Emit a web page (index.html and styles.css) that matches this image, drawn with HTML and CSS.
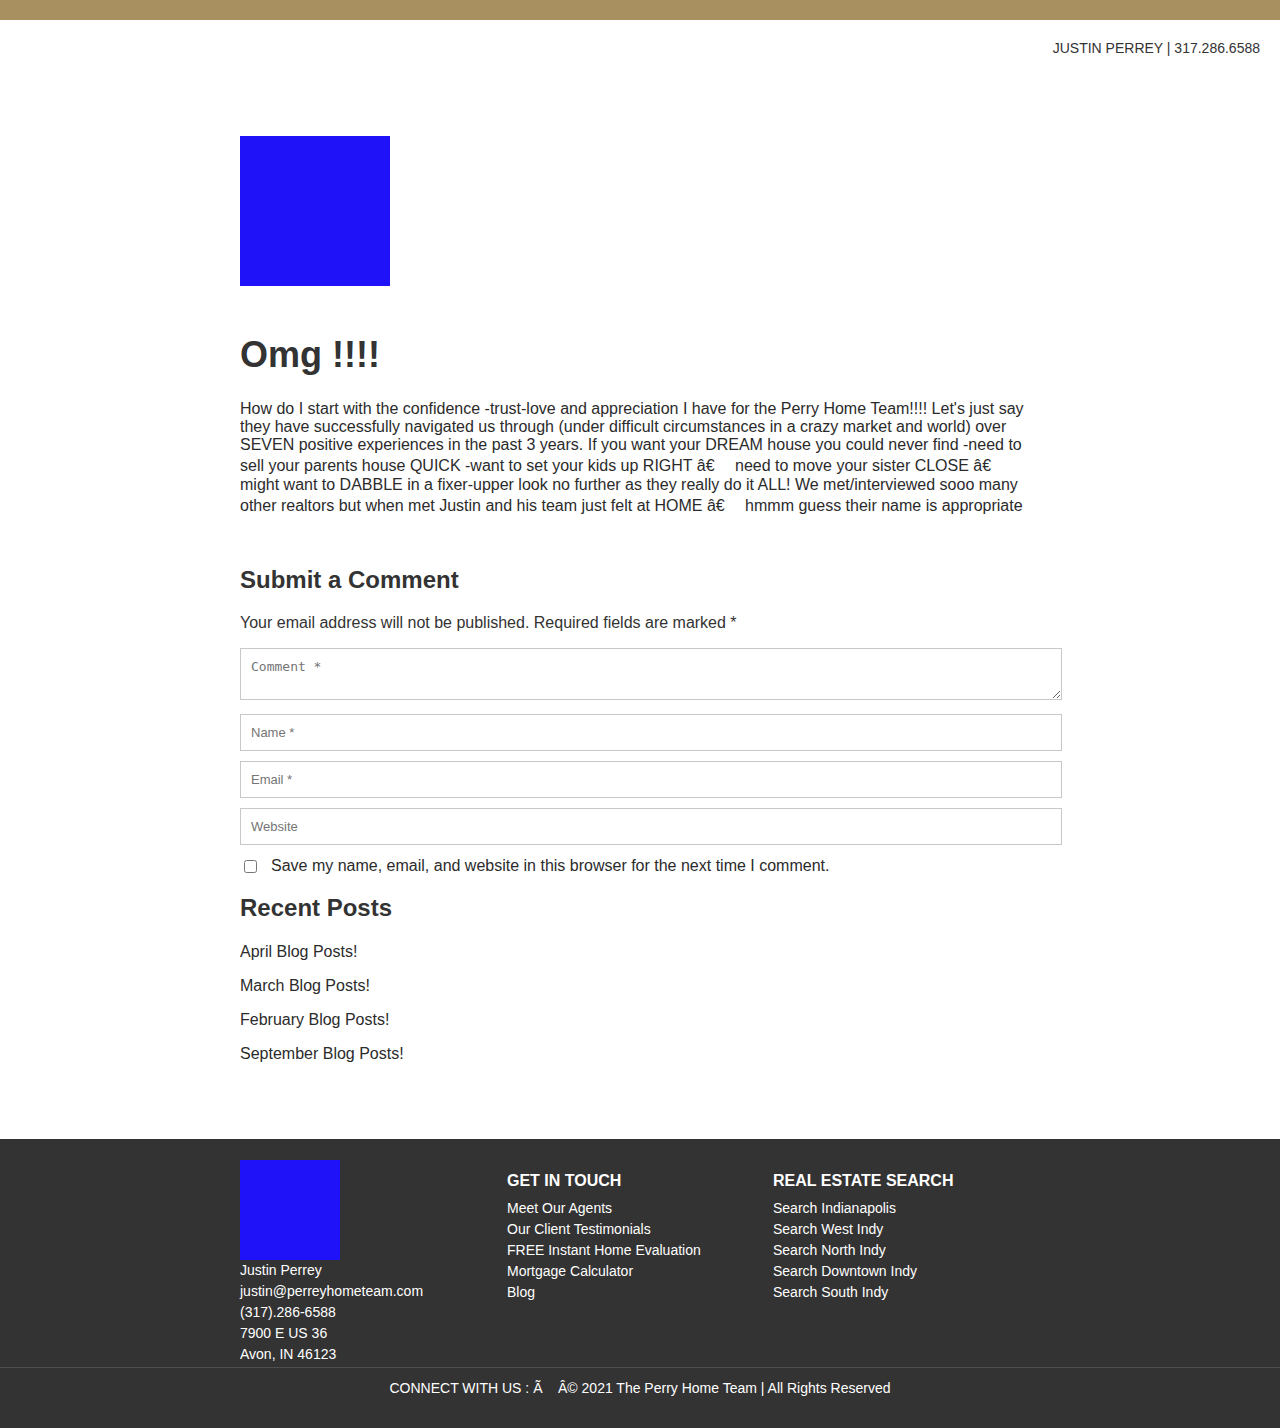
FILE: index.html
```html
<!DOCTYPE html>
<html lang="en">
<head>
<meta charset="utf-8">
<title>Omg !!!! | The Perry Home Team</title>
<link rel="stylesheet" href="styles.css">
</head>
<body>
<div class="topbar"></div>
<header class="site-header">
  <div class="header-contact">JUSTIN PERREY | 317.286.6588</div>
</header>
<main class="container main">
  <div class="logo"></div>
  <h1 class="post-title">Omg !!!!</h1>
  <p class="post-body">How do I start with the confidence -trust-love and appreciation I have for the Perry Home Team!!!! Let's just say they have successfully navigated us through (under difficult circumstances in a crazy market and world) over SEVEN positive experiences in the past 3 years. If you want your DREAM house you could never find -need to sell your parents house QUICK -want to set your kids up RIGHT â€<span class="gap"></span> need to move your sister CLOSE â€<span class="gap"></span> might want to DABBLE in a fixer-upper look no further as they really do it ALL! We met/interviewed sooo many other realtors but when met Justin and his team just felt at HOME â€<span class="gap"></span> hmmm guess their name is appropriate</p>

  <section class="comments">
    <h3 class="section-title">Submit a Comment</h3>
    <p class="notes">Your email address will not be published. Required fields are marked *</p>
    <form class="comment-form">
      <textarea class="field field-comment" placeholder="Comment *"></textarea>
      <input class="field" type="text" placeholder="Name *">
      <input class="field" type="text" placeholder="Email *">
      <input class="field" type="text" placeholder="Website">
      <label class="consent"><input type="checkbox" class="consent-box"><span>Save my name, email, and website in this browser for the next time I comment.</span></label>
    </form>
  </section>

  <section class="recent">
    <h3 class="section-title">Recent Posts</h3>
    <ul class="recent-list">
      <li>April Blog Posts!</li>
      <li>March Blog Posts!</li>
      <li>February Blog Posts!</li>
      <li>September Blog Posts!</li>
    </ul>
  </section>
</main>
<footer class="site-footer">
  <div class="container footer-cols">
    <div class="footer-col">
      <div class="footer-logo"></div>
      <ul class="footer-list">
        <li>Justin Perrey</li>
        <li>justin@perreyhometeam.com</li>
        <li>(317).286-6588</li>
        <li>7900 E US 36</li>
        <li>Avon, IN 46123</li>
      </ul>
    </div>
    <div class="footer-col">
      <h4 class="footer-title">GET IN TOUCH</h4>
      <ul class="footer-list">
        <li>Meet Our Agents</li>
        <li>Our Client Testimonials</li>
        <li>FREE Instant Home Evaluation</li>
        <li>Mortgage Calculator</li>
        <li>Blog</li>
      </ul>
    </div>
    <div class="footer-col">
      <h4 class="footer-title">REAL ESTATE SEARCH</h4>
      <ul class="footer-list">
        <li>Search Indianapolis</li>
        <li>Search West Indy</li>
        <li>Search North Indy</li>
        <li>Search Downtown Indy</li>
        <li>Search South Indy</li>
      </ul>
    </div>
  </div>
  <div class="footer-bottom">CONNECT WITH US : Ã&nbsp;&nbsp;&nbsp; Â© 2021 The Perry Home Team | All Rights Reserved</div>
</footer>
</body>
</html>
```
FILE: styles.css
```css
* { box-sizing: border-box; }
html, body { margin: 0; padding: 0; }
body {
  font-family: "Liberation Sans", Arial, sans-serif;
  color: #333;
  background: #fff;
}
.topbar { height: 20px; background: #a89060; }
.site-header { padding: 20px 20px 0; display: flex; justify-content: flex-end; }
.header-contact { font-size: 14px; line-height: 16px; color: #333; }

.container { width: 800px; margin: 0 auto; }
.main { padding-top: 80px; padding-bottom: 76px; }
.logo { width: 150px; height: 150px; background: #1f12f9; }

.post-title {
  margin: 48px 0 0;
  font-size: 36px;
  line-height: 42px;
  font-weight: 700;
  color: #333;
}
.post-body {
  margin: 24px 0 0;
  font-size: 16px;
  line-height: 18px;
  color: #2b2b2b;
}
.gap { display: inline-block; width: 16px; height: 22px; vertical-align: -5px; }

.comments { margin-top: 50px; }
.section-title {
  margin: 0;
  font-size: 24px;
  line-height: 28px;
  font-weight: 700;
  color: #333;
}
.notes { margin: 20px 0 0; font-size: 16px; line-height: 18px; }
.comment-form { margin-top: 16px; display: flex; flex-direction: column; width: 822px; }
.field {
  display: block;
  width: 822px;
  height: 37px;
  margin: 0 0 10px;
  padding: 0 10px;
  border: 1px solid #c8c8c8;
  border-radius: 0;
  background: #fff;
  font-family: "Liberation Sans", Arial, sans-serif;
  font-size: 13px;
  color: #333;
  outline: none;
}
.field::placeholder { color: #757575; }
.field-comment {
  height: 52px;
  margin-bottom: 14px;
  padding: 10px;
  font-family: "DejaVu Sans Mono", "Liberation Mono", monospace;
  font-size: 13px;
  resize: vertical;
}
.consent {
  display: flex;
  align-items: center;
  margin-top: 2px;
  font-size: 16px;
  line-height: 18px;
  color: #2b2b2b;
}
.consent-box { width: 13px; height: 13px; margin: 0 14px 0 4px; }

.recent { margin-top: 19px; }
.recent-list { list-style: none; margin: 21px 0 0; padding: 0; }
.recent-list li { font-size: 16px; line-height: 18px; margin-bottom: 16px; color: #2b2b2b; }
.recent-list li:last-child { margin-bottom: 0; }

.site-footer { background: #333; color: #fff; }
.footer-cols { display: grid; grid-template-columns: 267px 266px 267px; padding-top: 21px; padding-bottom: 2px; }
.footer-logo { width: 100px; height: 100px; background: #1f12f9; }
.footer-title {
  margin: 11px 0 0;
  font-size: 16px;
  line-height: 20px;
  font-weight: 700;
  color: #fff;
}
.footer-title + .footer-list { margin-top: 7px; }
.footer-list { list-style: none; margin: 0; padding: 0; }
.footer-list li { font-size: 14px; line-height: 21px; color: #fff; }
.footer-bottom {
  border-top: 1px solid #4f4f4f;
  padding: 10px 0 29px;
  text-align: center;
  font-size: 14px;
  line-height: 21px;
  color: #fff;
}
```
